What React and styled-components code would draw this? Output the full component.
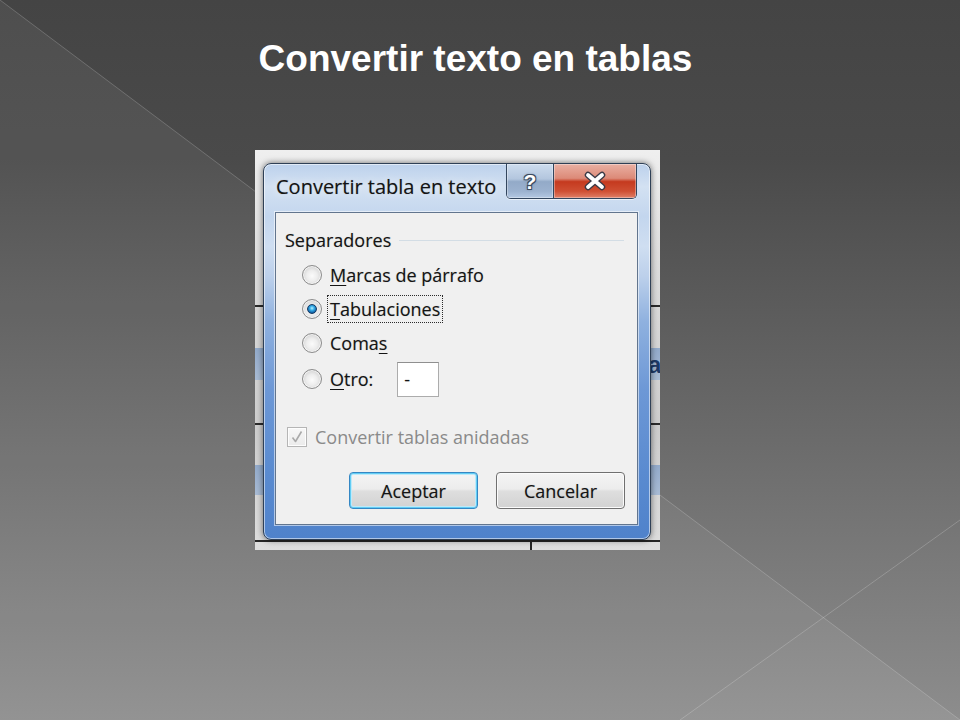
import React from "react";
import styled, { createGlobalStyle } from "styled-components";

const Global = createGlobalStyle`
  html, body { margin: 0; padding: 0; }
  body {
    width: 960px;
    height: 720px;
    overflow: hidden;
    font-family: "Liberation Sans", Arial, sans-serif;
  }
`;

const Stage = styled.main`
  position: relative;
  width: 960px;
  height: 720px;
  overflow: hidden;
  background: linear-gradient(180deg, #444444 0%, #4a4a4a 22%, #6a6a6a 60%, #8d8d8d 100%);
`;

const Backdrop = styled.svg`
  position: absolute;
  inset: 0;
  width: 960px;
  height: 720px;
  pointer-events: none;
`;

const Slide = styled.div`
  position: relative;
  display: flex;
  flex-direction: column;
  padding-top: 38px;
`;

const Title = styled.h1`
  margin: 0 9px 0 0;
  text-align: center;
  font: bold 37px/42px "Liberation Sans", Arial, sans-serif;
  color: #ffffff;
`;

const Shot = styled.div`
  position: relative;
  box-sizing: border-box;
  width: 405px;
  height: 400px;
  margin: 70px 0 0 255px;
  padding: 13px 9px 10px 8px;
  overflow: hidden;
  background:
    linear-gradient(#262626, #262626) 275px 386px / 2px 14px no-repeat,
    linear-gradient(180deg,
      transparent 155px, #2b2b2b 155px, #2b2b2b 157px, transparent 157px,
      transparent 198px, #93abcb 198px, #a9bcd5 230px, transparent 230px,
      transparent 273px, #2b2b2b 273px, #2b2b2b 275px, transparent 275px,
      transparent 315px, #93abcb 315px, #a9bcd5 345px, transparent 345px,
      transparent 390px, #262626 390px, #262626 392px, transparent 392px),
    linear-gradient(180deg, #efefef 0%, #dcdcdc 30%, #cdcdcd 70%, #dedede 100%);
`;

const DocGlyph = styled.span`
  position: absolute;
  left: 393px;
  top: 203px;
  font: bold 24px/24px "Liberation Sans", Arial, sans-serif;
  color: #1d3966;
`;

const Window = styled.section`
  position: relative;
  z-index: 1;
  box-sizing: border-box;
  width: 388px;
  height: 377px;
  display: flex;
  flex-direction: column;
  padding: 0 12px 14px 11px;
  border: 1px solid #2f4056;
  border-radius: 8px;
  background: linear-gradient(180deg,
    #bcd1ec 0%, #d3e1f2 6%, #c3d6ee 14%, #cfdef1 22%, #bcd0eb 30%,
    #8fb1df 42%, #6d98d6 60%, #5a8bd0 82%, #4f82cb 100%);
  box-shadow: 0 0 6px rgba(0, 0, 0, 0.55), inset 0 0 0 1px rgba(255, 255, 255, 0.55);
  font-family: "Open Sans", "Noto Sans", sans-serif;
`;

const TitleBar = styled.header`
  display: flex;
  align-items: flex-start;
  height: 48px;
`;

const WindowTitle = styled.span`
  padding: 12px 0 0 1px;
  font-size: 20px;
  line-height: 22px;
  color: #141414;
  text-shadow: 0 0 1px rgba(0, 0, 0, 0.3), 0 0 8px rgba(255, 255, 255, 0.8);
`;

const CaptionGroup = styled.div`
  display: flex;
  margin-left: auto;
  margin-right: 1px;
  height: 34px;
  border: 1px solid #33465e;
  border-top: none;
  border-radius: 0 0 5px 5px;
  overflow: hidden;
  box-shadow: 0 1px 0 rgba(255, 255, 255, 0.6);
`;

const CaptionButton = styled.div`
  display: flex;
  align-items: center;
  justify-content: center;
  width: ${(p) => (p.$close ? 82 : 46)}px;
  border-left: ${(p) => (p.$close ? "1px solid #33465e" : "none")};
  box-shadow: inset 0 0 0 1px rgba(255, 255, 255, 0.35);
  background: ${(p) =>
    p.$close
      ? "linear-gradient(180deg, #eab0a3 0%, #dc8a78 42%, #c53a1f 52%, #cf4f33 80%, #e08068 100%)"
      : "linear-gradient(180deg, #cddcee 0%, #b3c6de 44%, #93aac8 52%, #9cb2cf 80%, #b4c8e2 100%)"};
`;

const HelpGlyph = styled.span`
  font: bold 21px/21px "Liberation Sans", Arial, sans-serif;
  color: #ffffff;
  text-shadow:
    -1px -1px 0 #3b4b60, 1px -1px 0 #3b4b60, -1px 1px 0 #3b4b60, 1px 1px 0 #3b4b60,
    0 0 3px #3b4b60;
`;

const Client = styled.div`
  flex: 1;
  display: flex;
  flex-direction: column;
  padding: 16px 12px 15px 9px;
  border: 1px solid #62758e;
  background: #f0f0f0;
  box-shadow: 0 0 0 1px rgba(255, 255, 255, 0.55);
  color: #141414;
  font-size: 18px;
  line-height: 22px;
  text-shadow: 0 0 1px rgba(0, 0, 0, 0.28);
`;

const GroupHeader = styled.div`
  display: flex;
  align-items: center;
  gap: 8px;
  height: 22px;
`;

const GroupRule = styled.div`
  flex: 1;
  height: 1px;
  margin-right: 1px;
  background: #d3dde5;
`;

const RadioList = styled.div`
  display: flex;
  flex-direction: column;
  margin-top: 7px;
  padding-left: 17px;
`;

const RadioRow = styled.div`
  display: flex;
  align-items: center;
  height: ${(p) => (p.$tall ? 38 : 34)}px;
`;

const Radio = styled.span`
  position: relative;
  flex: none;
  box-sizing: border-box;
  width: 20px;
  height: 20px;
  border-radius: 50%;
  border: 1px solid #8c8c8c;
  background: radial-gradient(circle at 50% 55%, #fbfbfb 0%, #ededed 40%, #d3d3d3 75%, #c4c4c4 100%);
  box-shadow: inset 0 0 0 1px rgba(255, 255, 255, 0.7);

  &::after {
    content: "";
    display: ${(p) => (p.$checked ? "block" : "none")};
    position: absolute;
    inset: 4px;
    border-radius: 50%;
    box-sizing: border-box;
    border: 1px solid #163b63;
    background: radial-gradient(circle at 50% 40%, #b8f0ff 0%, #36aee8 35%, #0f5aa0 75%, #0b3f73 100%);
  }
`;

const OptionLabel = styled.span`
  margin-left: 5px;
  padding: 2px;
  border: 1px dotted ${(p) => (p.$focused ? "#2a2a2a" : "transparent")};
`;

const Key = styled.span`
  text-decoration: underline;
  text-decoration-thickness: 1px;
  text-underline-offset: 3px;
`;

const TextBox = styled.div`
  box-sizing: border-box;
  display: flex;
  align-items: center;
  width: 42px;
  height: 35px;
  margin-left: 21px;
  padding-left: 6px;
  border: 1px solid #acacac;
  border-top-color: #8f8f8f;
  background: #ffffff;
`;

const CheckRow = styled.div`
  display: flex;
  align-items: center;
  gap: 8px;
  margin-top: 28px;
  padding-left: 2px;
`;

const CheckBox = styled.span`
  display: flex;
  align-items: center;
  justify-content: center;
  box-sizing: border-box;
  width: 20px;
  height: 20px;
  border: 1px solid #b5b5b5;
  background: linear-gradient(180deg, #f7f7f7, #ebebeb);
  box-shadow: inset 0 0 0 1px #fdfdfd;
`;

const CheckLabel = styled.span`
  color: #8a8a8a;
  text-shadow: none;
`;

const ButtonRow = styled.div`
  display: flex;
  justify-content: flex-end;
  gap: 18px;
  margin-top: 24px;
`;

const DialogButton = styled.button`
  box-sizing: border-box;
  width: 129px;
  height: 37px;
  padding: 0;
  border-radius: 4px;
  border: 1px solid ${(p) => (p.$default ? "#3487c4" : "#707070")};
  box-shadow: ${(p) =>
    p.$default
      ? "inset 0 0 0 1px #62cdf4, inset 0 0 0 2px #bfe9f9"
      : "inset 0 0 0 1px #fbfbfb"};
  background: linear-gradient(180deg, #f4f4f4 0%, #ececec 46%, #dedede 52%, #d2d2d2 100%);
  font-family: "Open Sans", "Noto Sans", sans-serif;
  font-size: 18px;
  line-height: 22px;
  color: #141414;
  text-shadow: 0 0 1px rgba(0, 0, 0, 0.28);
`;

export default function App() {
  return (
    <Stage>
      <Global />
      <Backdrop viewBox="0 0 960 720">
        <polygon points="0,0 960,720 0,720" fill="#ffffff" fillOpacity="0.055" />
        <polygon points="823.5,617.7 680,720 960,720" fill="#ffffff" fillOpacity="0.025" />
        <line x1="0" y1="0" x2="960" y2="720" stroke="#ffffff" strokeOpacity="0.2" strokeWidth="1" />
        <line x1="960" y1="520" x2="680" y2="720" stroke="#ffffff" strokeOpacity="0.2" strokeWidth="1" />
      </Backdrop>
      <Slide>
        <Title>Convertir texto en tablas</Title>
        <Shot>
          <DocGlyph>a</DocGlyph>
          <Window>
            <TitleBar>
              <WindowTitle>Convertir tabla en texto</WindowTitle>
              <CaptionGroup>
                <CaptionButton>
                  <HelpGlyph>?</HelpGlyph>
                </CaptionButton>
                <CaptionButton $close>
                  <svg width="24" height="20" viewBox="0 0 24 20">
                    <path d="M5 4 L19 16 M19 4 L5 16" stroke="#3a3a46" strokeWidth="6.5" strokeLinecap="round" fill="none" />
                    <path d="M5 4 L19 16 M19 4 L5 16" stroke="#ffffff" strokeWidth="3.8" strokeLinecap="round" fill="none" />
                  </svg>
                </CaptionButton>
              </CaptionGroup>
            </TitleBar>
            <Client>
              <GroupHeader>
                <span>Separadores</span>
                <GroupRule />
              </GroupHeader>
              <RadioList>
                <RadioRow>
                  <Radio />
                  <OptionLabel>
                    <Key>M</Key>arcas de párrafo
                  </OptionLabel>
                </RadioRow>
                <RadioRow>
                  <Radio $checked />
                  <OptionLabel $focused>
                    <Key>T</Key>abulaciones
                  </OptionLabel>
                </RadioRow>
                <RadioRow>
                  <Radio />
                  <OptionLabel>
                    Coma<Key>s</Key>
                  </OptionLabel>
                </RadioRow>
                <RadioRow $tall>
                  <Radio />
                  <OptionLabel>
                    <Key>O</Key>tro:
                  </OptionLabel>
                  <TextBox>-</TextBox>
                </RadioRow>
              </RadioList>
              <CheckRow>
                <CheckBox>
                  <svg width="14" height="14" viewBox="0 0 14 14">
                    <path d="M2.5 7.5 L5.5 11.5 L11.5 1.5" stroke="#a9a9a9" strokeWidth="1.6" fill="none" strokeLinejoin="round" />
                  </svg>
                </CheckBox>
                <CheckLabel>Convertir tablas anidadas</CheckLabel>
              </CheckRow>
              <ButtonRow>
                <DialogButton $default>Aceptar</DialogButton>
                <DialogButton>Cancelar</DialogButton>
              </ButtonRow>
            </Client>
          </Window>
        </Shot>
      </Slide>
    </Stage>
  );
}
